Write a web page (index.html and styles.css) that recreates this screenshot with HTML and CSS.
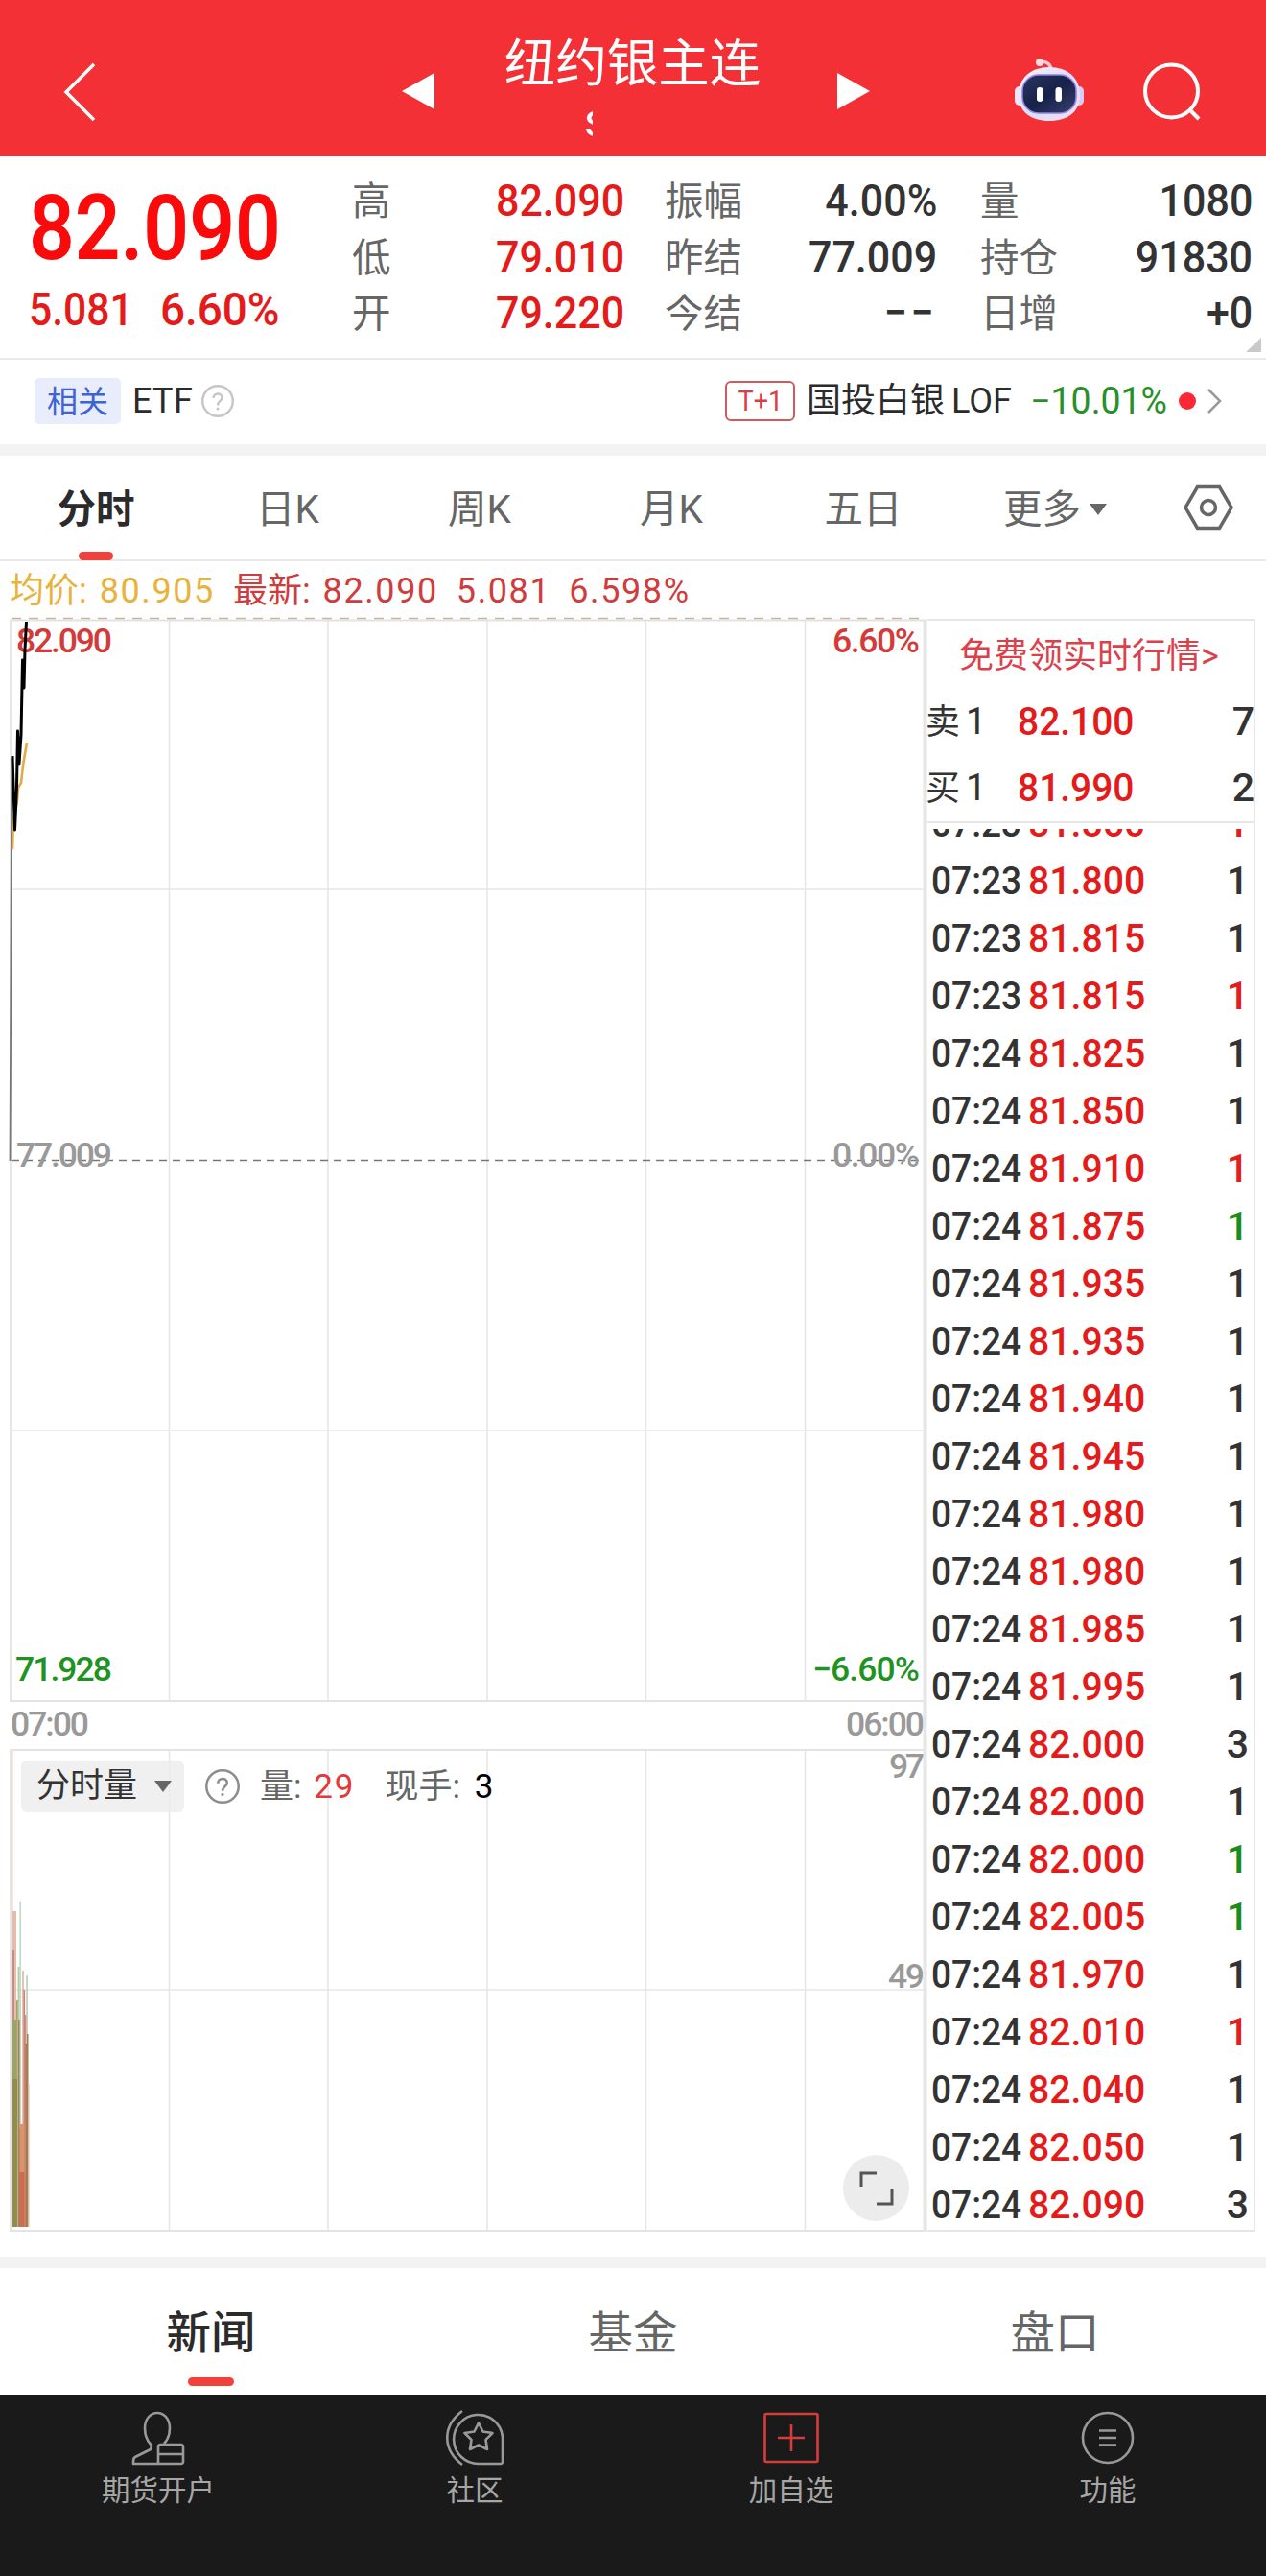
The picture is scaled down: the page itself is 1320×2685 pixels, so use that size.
FILE: index.html
```html
<!DOCTYPE html>
<html lang="zh-CN">
<head>
<meta charset="utf-8">
<title>纽约银主连</title>
<link rel="stylesheet" href="styles.css">
</head>
<body>
<header class="topbar">
  <svg class="back" width="36" height="62" viewBox="0 0 36 62"><path d="M33 2 4 31l29 29" /></svg>
  <svg class="prev" width="36" height="40" viewBox="0 0 36 40"><path d="M1 20 35 1v38z"/></svg>
  <div class="heading">
    <h1>纽约银主连</h1>
    <span class="code">S</span>
  </div>
  <svg class="next" width="36" height="40" viewBox="0 0 36 40"><path d="M35 20 1 1v38z"/></svg>
  <svg class="robot" width="74" height="68" viewBox="0 0 74 68">
    <defs>
      <linearGradient id="shell" x1="0" y1="0" x2="1" y2="1"><stop offset="0" stop-color="#fff2f6"/><stop offset=".5" stop-color="#dcdcfb"/><stop offset="1" stop-color="#f6dfee"/></linearGradient>
      <linearGradient id="visor" x1="0" y1="0" x2="1" y2="1"><stop offset="0" stop-color="#2b3560"/><stop offset=".5" stop-color="#17224a"/><stop offset="1" stop-color="#39406e"/></linearGradient>
    </defs>
    <path d="M27 5c7-2 12 2 12 9" fill="none" stroke="#ffc9d2" stroke-width="3.5"/>
    <circle cx="27" cy="5" r="4" fill="#ffdce2"/>
    <rect x="1" y="30" width="12" height="20" rx="5" fill="#efe4fb"/>
    <rect x="61" y="30" width="12" height="20" rx="5" fill="#d9cbf7"/>
    <path d="M37 10c19 0 32 11 32 29S56 66 37 66 5 57 5 39s13-29 32-29z" fill="url(#shell)"/>
    <rect x="9" y="18" width="56" height="40" rx="17" fill="url(#visor)" stroke="#8b83e6" stroke-width="1.5"/>
    <rect x="24" y="31" width="6.5" height="15" rx="3.2" fill="#fff"/>
    <rect x="43.500" y="31" width="6.500" height="15" rx="3.200" fill="#fff"/>
  </svg>
  <svg class="search" width="62" height="62" viewBox="0 0 62 62"><circle cx="30.500" cy="31" r="27.500"/><path d="M49 50l10 10"/></svg>
</header>

<section class="quote">
  <div class="last">
    <div class="price"><span class="n">82.090</span></div>
    <div class="change"><span class="n">5.081</span><span class="n rate">6.60%</span></div>
  </div>
  <dl class="stats c1">
    <dt>高</dt><dd class="up"><span class="n">82.090</span></dd>
    <dt>低</dt><dd class="up"><span class="n">79.010</span></dd>
    <dt>开</dt><dd class="up"><span class="n">79.220</span></dd>
  </dl>
  <dl class="stats c2">
    <dt>振幅</dt><dd><span class="n">4.00%</span></dd>
    <dt>昨结</dt><dd><span class="n">77.009</span></dd>
    <dt>今结</dt><dd><span class="n dash">−−</span></dd>
  </dl>
  <dl class="stats c3">
    <dt>量</dt><dd><span class="n">1080</span></dd>
    <dt>持仓</dt><dd><span class="n">91830</span></dd>
    <dt>日增</dt><dd><span class="n">+0</span></dd>
  </dl>
  <i class="corner"></i>
</section>

<section class="related">
  <span class="tag">相关</span>
  <span class="etf">ETF</span>
  <svg class="help" width="34" height="34" viewBox="0 0 34 34"><circle cx="17" cy="17" r="15.800"/><path d="M12.500 14c0-6 9-6 9-.5 0 3.500-4.500 3.500-4.500 8"/><circle class="dot" cx="17" cy="25" r="1.500"/></svg>
  <span class="t1"><span>T+1</span></span>
  <span class="fund">国投白银</span><span class="lof">LOF</span>
  <span class="pct"><span class="n">−10.01%</span></span>
  <i class="live"></i>
  <svg class="go" width="16" height="26" viewBox="0 0 16 26"><path d="M2 1l12 12L2 25"/></svg>
</section>

<nav class="periods">
  <span class="on">分时</span><span>日K</span><span>周K</span><span>月K</span><span>五日</span><span class="more">更多<i></i></span>
  <svg width="52" height="48" viewBox="0 0 52 48"><path d="M14.500 2.500h23L50 24 37.500 45.500h-23L2 24z"/><circle cx="26" cy="24" r="7.500"/></svg>
</nav>

<div class="legend"><span class="avg">均价: <b>80.905</b></span><span class="cur">最新: <b>82.090</b></span><span class="cur alone"><b>5.081</b></span><span class="cur alone"><b>6.598%</b></span></div>

<main class="board">
  <div class="chart">
    <svg class="plot" width="967" height="1686" viewBox="0 641 967 1686">
      <g class="grid">
        <path d="M176.500 646V1773M342 646V1773M508 646V1773M673.500 646V1773M839.500 646V1773M176.500 1824V2325M342 1824V2325M508 1824V2325M673.500 1824V2325M839.500 1824V2325"/>
        <path d="M12 927H963M12 1491H963M12 2074H963"/>
        <path class="frame" d="M10 646.500H966M10 1773H963M10 1824H963M10 2325H966"/>
        <path class="side" d="M11.500 646V1773M11.500 1824V2325"/>
        <path class="wide" d="M964.500 646V2326"/>
      </g>
      <path class="high" d="M12 644.500H963"/>
      <path class="zero" d="M12 1209.500H963"/>
      <path class="open" d="M10.500 1210 12 860V790"/>
      <path class="mean" d="M13 885l1-30 4-20 1-14 3-5 2-18 4-24"/>
      <g class="axis">
        <text class="r" x="17" y="680" textLength="100">82.090</text>
        <text class="r" x="868" y="680" textLength="91">6.60%</text>
        <text x="17" y="1216" textLength="100">77.009</text>
        <text x="868" y="1216" textLength="91">0.00%</text>
        <text class="g" x="16" y="1752" textLength="101">71.928</text>
        <text class="g" x="847" y="1752" textLength="112">−6.60%</text>
        <text x="11" y="1809" textLength="82">07:00</text>
        <text x="882" y="1809" textLength="82">06:00</text>
        <text x="927" y="1853" textLength="37">97</text>
        <text x="926" y="2072" textLength="38">49</text>
      </g>
      <path class="tick" d="M13 788l2.500 77 2-45 1-58 1.500 34 2-30 1.500-78 1.500 29 1-40 1.500-29"/>
      <g class="vol">
        <path fill="#ecc9c2" d="M11.800 1825h1.600v496h-1.600z"/>
        <path fill="#dfbfa9" d="M13 1992h4v329h-4z"/>
        <path fill="#c98b80" d="M13 2033h2v288h-2z"/>
        <path fill="#95a668" d="M13 2105h4v216h-4z"/>
        <path fill="#aba272" d="M17 2085h2v236h-2z"/>
        <path fill="#bccba6" d="M18.500 2050h2v271h-2z"/>
        <path fill="#b27c55" d="M19 2105h2v216h-2z"/>
        <path fill="#abd5bb" d="M20.500 1982h1.300v236h-1.300z"/>
        <path fill="#d8aa96" d="M23.300 2054h1.400v267h-1.400z"/>
        <path fill="#d97a70" d="M24.500 2074h1.600v247h-1.600z"/>
        <path fill="#d98a80" d="M26 2100h1.500v221H26z"/>
        <path fill="#aecbb4" d="M27.300 2059h1.500v262h-1.500z"/>
        <path fill="#a07e50" d="M26.500 2130h3v191h-3zM28 2120h1.500v201H28z"/>
        <path fill="#e9b5a5" d="M29.500 2172h1v149h-1z"/>
        <path fill="#d9946e" d="M20.500 2214h5v107h-5z"/>
        <path fill="#8a8f50" d="M13 2167h5v154h-5z"/>
        <path fill="#cc6c50" d="M20 2264h5.500v57H20z"/>
      </g>
    </svg>
    <div class="volbar">
      <span class="pick">分时量<i></i></span>
      <svg class="help dark" width="36" height="36" viewBox="0 0 34 34"><circle cx="17" cy="17" r="15.800"/><path d="M12.500 14c0-6 9-6 9-.5 0 3.500-4.500 3.500-4.500 8"/><circle class="dot" cx="17" cy="25" r="1.500"/></svg>
      <span class="k">量: <b class="red">29</b></span>
      <span class="k">现手: <b>3</b></span>
    </div>
    <div class="expand"><svg width="36" height="36" viewBox="0 0 36 36"><path d="M2 17V2h16M34 19v15H18"/></svg></div>
  </div>

  <aside class="depth">
    <a class="promo">免费领实时行情&gt;</a>
    <div class="level"><span>卖<em>1</em></span><b><span class="n">82.100</span></b><u>7</u></div>
    <div class="level"><span>买<em>1</em></span><b><span class="n">81.990</span></b><u>2</u></div>
    <div class="ticks">
      <p><span>07:23</span><b>81.850</b><u class="red">1</u></p>
      <p><span>07:23</span><b>81.800</b><u>1</u></p>
      <p><span>07:23</span><b>81.815</b><u>1</u></p>
      <p><span>07:23</span><b>81.815</b><u class="red">1</u></p>
      <p><span>07:24</span><b>81.825</b><u>1</u></p>
      <p><span>07:24</span><b>81.850</b><u>1</u></p>
      <p><span>07:24</span><b>81.910</b><u class="red">1</u></p>
      <p><span>07:24</span><b>81.875</b><u class="green">1</u></p>
      <p><span>07:24</span><b>81.935</b><u>1</u></p>
      <p><span>07:24</span><b>81.935</b><u>1</u></p>
      <p><span>07:24</span><b>81.940</b><u>1</u></p>
      <p><span>07:24</span><b>81.945</b><u>1</u></p>
      <p><span>07:24</span><b>81.980</b><u>1</u></p>
      <p><span>07:24</span><b>81.980</b><u>1</u></p>
      <p><span>07:24</span><b>81.985</b><u>1</u></p>
      <p><span>07:24</span><b>81.995</b><u>1</u></p>
      <p><span>07:24</span><b>82.000</b><u>3</u></p>
      <p><span>07:24</span><b>82.000</b><u>1</u></p>
      <p><span>07:24</span><b>82.000</b><u class="green">1</u></p>
      <p><span>07:24</span><b>82.005</b><u class="green">1</u></p>
      <p><span>07:24</span><b>81.970</b><u>1</u></p>
      <p><span>07:24</span><b>82.010</b><u class="red">1</u></p>
      <p><span>07:24</span><b>82.040</b><u>1</u></p>
      <p><span>07:24</span><b>82.050</b><u>1</u></p>
      <p><span>07:24</span><b>82.090</b><u>3</u></p>
    </div>
  </aside>
</main>

<nav class="sections"><span class="on">新闻</span><span>基金</span><span>盘口</span></nav>

<footer class="dock">
  <div>
    <svg width="60" height="60" viewBox="0 0 60 60"><path d="M36 36c4-4 6-9 6-16C42 10 36 4 29 4S16 10 16 20c0 8 3 14 7 18l-1 4L6 50c-2 1-2 3-2 7h50c1 0 2-1 2-2V39c0-1-1-2-2-2H32c-1 0-2 1-2 2v18M30 47h26"/></svg>
    <span>期货开户</span>
  </div>
  <div>
    <svg width="60" height="60" viewBox="0 0 60 60"><path d="M17 2C-4 18-4 42 17 58M59 29v26c0 1-1 2-2 2H34a25.500 25.500 0 1 1 25-28z"/><path d="M34 14.500l4.500 9 10 1.500-7 7 1.500 10-9-4.500-9 4.500 1.500-10-7-7 10-1.500z"/></svg>
    <span>社区</span>
  </div>
  <div>
    <svg class="add" width="60" height="60" viewBox="0 0 60 60"><rect x="2.500" y="5" width="55" height="50" rx="1.500"/><path d="M30 16v28M16 30h28"/></svg>
    <span>加自选</span>
  </div>
  <div>
    <svg width="60" height="60" viewBox="0 0 60 60"><circle cx="30" cy="30" r="26"/><path d="M21 22.500h18M21 30h18M21 37.500h18"/></svg>
    <span>功能</span>
  </div>
</footer>
</body>
</html>
```
FILE: styles.css
```css
* { box-sizing: border-box; }
body {
  margin: 0;
  width: 1320px;
  height: 2685px;
  background: #fff;
  color: #333;
  font-family: Roboto, "Noto Sans CJK SC", sans-serif;
  display: flex;
  flex-direction: column;
  overflow: hidden;
}
h1, dl, dd, dt, p { margin: 0; font-weight: 400; }
b { font-weight: 500; }
i, em { font-style: normal; }
u { text-decoration: none; }
svg { display: block; flex: none; }
.n { display: inline-block; white-space: pre; transform-origin: right center; }
.red { color: #e02020; }
.green { color: #1c8c1c; }

/* top bar */
.topbar { height: 163px; background: #f23036; display: flex; align-items: flex-start; }
.topbar svg { fill: #fff; }
.topbar .back { margin: 65px 0 0 65px; fill: none; stroke: #fff; stroke-width: 3.5; }
.topbar .prev { margin: 75px 0 0 317px; }
.heading { width: 420px; display: flex; flex-direction: column; align-items: center; padding: 37px 9px 0 0; color: #fff; }
.heading h1 { font-size: 53.500px; line-height: 60px; font-weight: 400; }
.heading .code { width: 8px; height: 32px; margin: 17px 0 0 -91px; overflow: hidden; font-size: 36px; line-height: 32px; font-weight: 500; }
.topbar .next { margin: 75px 0 0 -2px; }
.topbar .robot { margin: 60px 0 0 149px; }
.topbar .search { margin: 64px 0 0 60px; fill: none; stroke: #fff; stroke-width: 4; }

/* quote */
.quote { position: relative; height: 212px; display: flex; border-bottom: 2px solid #e9e9e9; padding-top: 17px; }
.last { width: 367px; color: #fa0a0a; font-weight: 500; }
.price { font-size: 94px; line-height: 117px; height: 114px; padding-left: 30px; font-weight: 600; }
.price .n { transform: scaleX(.89); transform-origin: left; }
.change { display: flex; font-size: 49px; line-height: 57px; padding: 0 0 0 30px; color: #e31b1b; }
.change .n { transform: scaleX(.87); transform-origin: left; width: 137px; }
.change .rate { transform: scaleX(.935); }
.stats { display: grid; grid-template-columns: auto 1fr; grid-auto-rows: 58.500px; align-content: start; line-height: 61px; }
.stats dt { font-size: 40.500px; color: #666; }
.stats dd { font-size: 47px; text-align: right; font-weight: 500; line-height: 57px; }
.stats .n { transform: translateX(1.500px) scaleX(.915); }
.stats .dash { letter-spacing: 4px; }
.stats .up, .up { color: #e31b1b; }
.c1 { width: 283px; }
.c2 { width: 283px; margin-left: 43px; }
.c3 { width: 283px; margin-left: 46px; }
.corner { position: absolute; right: 5px; bottom: 6px; border: solid transparent; border-width: 15px 0 0 16px; border-bottom: 15px solid #c9c9c9; border-top: 0; }

/* related fund */
.related { height: 100px; border-bottom: 12px solid #f3f3f3; display: flex; align-items: center; padding: 0 46px 3px 36px; font-size: 36px; line-height: 48px; color: #2b2b2b; }
.tag { width: 90px; height: 48px; border-radius: 5px; background: #e9edfb; color: #3d63d6; font-size: 32px; text-align: center; line-height: 50px; }
.etf { margin: 0 9px 0 12px; letter-spacing: .3px; }
.help { fill: none; stroke: #c6c6c6; stroke-width: 2.4; }
.help .dot { fill: #c6c6c6; stroke: none; }
.help.dark { stroke: #8d8d8d; }
.help.dark .dot { fill: #8d8d8d; }
.t1 { width: 73px; height: 42px; margin: 0 12px 0 auto; border: 2px solid #cf5a62; border-radius: 6px; color: #dc3c46; font-size: 30px; line-height: 38px; display: flex; justify-content: center; }
.t1 span { transform: scaleX(.9); }
.lof { margin-left: 7px; }
.pct { color: #289028; font-size: 38px; width: 161px; text-align: right; }
.pct .n { transform: translateX(1px) scaleX(.985); }
.live { width: 18px; height: 18px; border-radius: 50%; background: #fb2836; margin: 0 11px 0 13px; }
.go { fill: none; stroke: #999; stroke-width: 2.5; }

/* periods */
.periods { height: 110px; display: flex; align-items: center; border-bottom: 2px solid #e8e8e8; font-size: 40.500px; line-height: 62px; color: #666; }
.periods span { position: relative; width: 200px; padding-top: 3px; text-align: center; }
.periods .on { color: #2b2b2b; font-weight: 700; }
.periods .on::after, .sections .on::after { content: ""; position: absolute; left: 50%; background: #f2413b; border-radius: 5px; }
.periods .on::after { width: 36px; height: 9px; margin-left: -18px; bottom: -22px; }
.periods .more { display: flex; align-items: center; justify-content: center; }
.more i, .pick i { border: solid transparent; border-width: 12px 9px 0; border-top-color: #666; }
.more i { margin-left: 9px; }
.periods svg { margin-left: 34px; fill: none; stroke: #666; stroke-width: 3.5; }

/* legend */
.legend { height: 56px; padding: 3px 0 0 10px; display: flex; font-size: 36px; line-height: 56px; white-space: pre; }
.legend b { font-weight: 400; letter-spacing: 1.6px; margin-left: 4px; }
.legend .avg { color: #e8b23c; }
.legend .cur { color: #d03c3c; margin-left: 19px; }
.legend .alone { margin-left: 15px; }

/* chart board */
.board { height: 1686px; display: flex; }
.chart { position: relative; width: 967px; }
.grid path { fill: none; stroke: #e6e6e6; stroke-width: 1.6; }
.grid .frame { stroke: #e3e3e3; stroke-width: 2; }
.grid .side { stroke: #e6e6e6; stroke-width: 3; }
.grid .wide { stroke: #e6e6e6; stroke-width: 4; }
.plot > path { fill: none; }
.plot .high { stroke: #c9b49a; stroke-width: 1.6; stroke-dasharray: 10 8; }
.plot .zero { stroke: #777; stroke-width: 1.6; stroke-dasharray: 8 6; }
.plot .open { stroke: #777; stroke-width: 1.8; }
.plot .mean { stroke: #e2ab45; stroke-width: 2.6; }
.plot .tick { stroke: #000; stroke-width: 3; stroke-linejoin: round; }
.axis { font-size: 35.500px; font-weight: 500; fill: #999; }
.axis .r { fill: #d43a3a; }
.axis .g { fill: #1f931f; }
.volbar { position: absolute; left: 22px; top: 1194px; height: 54px; display: flex; align-items: center; font-size: 35px; line-height: 54px; }
.pick { width: 170px; background: rgba(236, 236, 236, .8); border-radius: 6px; display: flex; align-items: center; padding-left: 16px; line-height: 56px; height: 54px; }
.pick i { margin-left: 18px; }
.volbar .help { margin: 0 21px 0 22px; }
.k { color: #666; white-space: pre; margin-right: 31px; line-height: 57px; }
.k b { font-weight: 400; color: #000; margin-left: 6px; }
.k b.red { color: #e03a3a; letter-spacing: 2px; margin-left: 4px; }
.expand { position: absolute; left: 879px; top: 1605px; width: 69px; height: 69px; border-radius: 50%; background: #ececec; display: flex; align-items: center; justify-content: center; }
.expand svg { fill: none; stroke: #555; stroke-width: 3; }

/* order book */
.depth { width: 342px; height: 1681px; margin-top: 4px; border: solid #e6e6e6; border-width: 2px 2px 2px 0; display: flex; flex-direction: column; color: #333; }
.promo { height: 71px; padding: 0 0 0 33px; font-size: 36px; line-height: 74px; color: #dc414b; white-space: nowrap; }
.level { display: flex; height: 69px; line-height: 69px; font-size: 41px; }
.level > span { width: 94px; font-size: 36px; text-indent: -2px; }
.level em { font-size: 38px; margin-left: 6px; }
.level b { color: #e31b1b; }
.level .n { transform: scaleX(.95); transform-origin: left; }
.level u, .ticks u { margin-left: auto; font-weight: 500; }
.level u { margin-right: -1px; }
.ticks { flex: 1; border-top: 2px solid #e6e6e6; padding-top: 6px; overflow: hidden; font-size: 41px; line-height: 60px; }
.ticks p { display: flex; height: 60px; padding: 0 5px 0 4px; font-weight: 500; }
.ticks p:first-child { height: 24px; overflow: hidden; align-items: flex-end; }
.ticks span { width: 101px; transform: scaleX(.905); transform-origin: left; }
.ticks b { color: #e31b1b; transform: scaleX(.955); transform-origin: left; }

/* sections */
.sections { height: 144px; margin-top: 25px; border-top: 12px solid #f3f3f3; display: grid; grid-template-columns: repeat(3, 1fr); text-align: center; font-size: 46.500px; line-height: 136px; color: #666; }
.sections span { position: relative; }
.sections .on { color: #2b2b2b; font-weight: 500; }
.sections .on::after { width: 48px; height: 9px; margin-left: -24px; bottom: 13px; }

/* dock */
.dock { flex: 1; background: #1a1a1a; display: grid; grid-template-columns: repeat(4, 1fr); color: #a6a6a6; }
.dock div { display: flex; flex-direction: column; align-items: center; padding-top: 15px; font-size: 29.500px; line-height: 40px; }
.dock svg { fill: none; stroke: #999; stroke-width: 2.600; stroke-linejoin: round; }
.dock span { margin-top: 5px; }
.dock .add { stroke: #d63c3c; }
```
